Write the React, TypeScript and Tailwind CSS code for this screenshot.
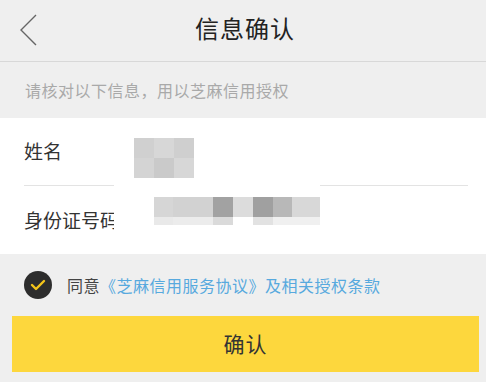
import React from 'react';

const nameBlocks = [
  ['#d0d0d0', '#d7d7d7', '#cfcfcf'],
  ['#d4d4d4', '#cacaca', '#d7d7d7'],
];

const idTop = [
  { w: 19, c: '#d6d6d6' },
  { w: 40, c: '#d2d2d2' },
  { w: 20, c: '#a2a2a2' },
  { w: 20, c: '#dcdcdc' },
  { w: 20, c: '#a0a0a0' },
  { w: 19, c: '#b8b8b8' },
  { w: 28, c: '#d8d8d8' },
];

const idBottom = [
  { w: 19, c: '#e9e9e9' },
  { w: 40, c: '#ececec' },
  { w: 20, c: '#dadada' },
  { w: 20, c: '#ffffff' },
  { w: 20, c: '#e2e2e2' },
  { w: 47, c: '#f0f0f0' },
];

export default function App() {
  return (
    <div
      className="w-[486px] h-[382px] bg-[#efefef] flex flex-col overflow-hidden"
      style={{ fontFamily: '"Noto Sans CJK SC", "Noto Sans", sans-serif' }}
    >
      <div className="relative h-[62px] border-b border-[#d8d8d8] flex items-center justify-center shrink-0">
        <svg className="absolute left-[18px] top-[13px]" width="22" height="34" viewBox="0 0 22 34">
          <polyline points="18,2 3,17 18,32" fill="none" stroke="#666" strokeWidth="1.4" />
        </svg>
        <span className="text-[24px] text-[#222] tracking-[1px] -mt-[5px] ml-[4px]">信息确认</span>
      </div>

      <div className="h-[56px] px-[25px] flex items-center text-[16px] text-[#a9a9a9] tracking-[0.5px] shrink-0">
        请核对以下信息，用以芝麻信用授权
      </div>

      <div className="relative bg-white pl-[24px] pr-[18px] shrink-0">
        <div className="h-[68px] border-b border-[#e3e3e3] flex items-center text-[19px] text-[#333]">
          姓名
        </div>
        <div className="h-[68px] flex items-center text-[19px] text-[#333]">身份证号码</div>

        {/* mosaic cover */}
        <div className="absolute left-[114px] top-[56px] w-[206px] h-[76px] bg-white" />
        <div className="absolute left-[134px] top-[20px] flex flex-col">
          {nameBlocks.map((row, i) => (
            <div key={i} className="flex">
              {row.map((c, j) => (
                <div key={j} className="w-[20px] h-[20px]" style={{ background: c }} />
              ))}
            </div>
          ))}
        </div>
        <div className="absolute left-[154px] top-[79px] flex flex-col">
          <div className="flex h-[20px]">
            {idTop.map((b, i) => (
              <div key={i} className="h-full" style={{ width: b.w, background: b.c }} />
            ))}
          </div>
          <div className="flex h-[8px]">
            {idBottom.map((b, i) => (
              <div key={i} className="h-full" style={{ width: b.w, background: b.c }} />
            ))}
          </div>
        </div>
      </div>

      <div className="h-[62px] pl-[24px] flex items-center shrink-0">
        <div className="w-[28px] h-[28px] rounded-full bg-[#2d2d2d] flex items-center justify-center">
          <svg width="16" height="12" viewBox="0 0 16 12">
            <polyline points="2,6 6,10 14,2" fill="none" stroke="#f4c51b" strokeWidth="2.4" strokeLinecap="round" strokeLinejoin="round" />
          </svg>
        </div>
        <span className="ml-[15px] text-[16px] tracking-[0.5px] text-[#444]">
          同意<span className="text-[#57a9de]">《芝麻信用服务协议》及相关授权条款</span>
        </span>
      </div>

      <div className="ml-[12px] mr-[7px] h-[56px] bg-[#fdd73d] flex items-center justify-center shrink-0">
        <span className="text-[21px] text-[#333] tracking-[1px]">确认</span>
      </div>
    </div>
  );
}
